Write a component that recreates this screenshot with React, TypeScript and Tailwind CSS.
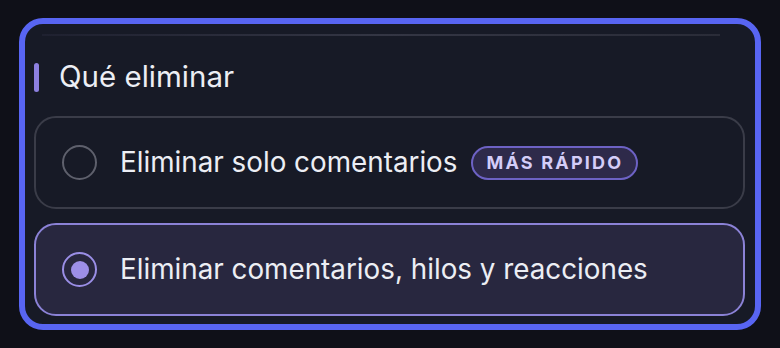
import React from "react";

export default function App() {
  return (
    <div
      className="w-[780px] h-[348px] bg-[#0f1018] pt-[18px] pl-[19px] pr-[19px]"
      style={{ fontFamily: "Inter, 'Noto Sans', sans-serif" }}
    >
      <div className="h-[312px] rounded-[24px] border-[6px] border-[#5865f2] bg-[#171a26] pl-[9px] pr-[10px] overflow-hidden flex flex-col">
        <div className="mt-[10px] h-[2px] ml-[8px] mr-[25px] bg-gradient-to-r from-[#1f2130] via-[#343644] to-[#2a2c38]" />
        <div className="mt-[21px] h-[40px] flex items-center">
          <div className="w-[5px] h-[29px] rounded-full bg-[#8d80e0]" />
          <span className="ml-[20px] text-[29.5px] leading-none text-[#eceef4]">
            Qué eliminar
          </span>
        </div>
        <div className="mt-[19px] h-[93px] rounded-[22px] border-2 border-[#3a3c48] bg-[#171a26] flex items-center pl-[26px]">
          <div className="w-[35px] h-[35px] rounded-full border-2 border-[#5e606c]" />
          <span className="ml-[23px] text-[27.8px] leading-none text-[#eceef4]">
            Eliminar solo comentarios
          </span>
          <span className="ml-[14px] h-[34px] px-[13px] rounded-full border-2 border-[#6d62c4] bg-[#2e2a4a] flex items-center text-[18px] font-bold tracking-[2.2px] text-[#d4cdf8]">
            MÁS RÁPIDO
          </span>
        </div>
        <div className="mt-[14px] h-[93px] rounded-[22px] border-2 border-[#8b82d6] bg-[#28273f] flex items-center pl-[26px]">
          <div className="w-[35px] h-[35px] rounded-full border-2 border-[#9a8ee6] flex items-center justify-center">
            <div className="w-[18px] h-[18px] rounded-full bg-[#9d8fe8]" />
          </div>
          <span className="ml-[23px] text-[27.8px] leading-none text-[#eceef4]">
            Eliminar comentarios, hilos y reacciones
          </span>
        </div>
      </div>
    </div>
  );
}
